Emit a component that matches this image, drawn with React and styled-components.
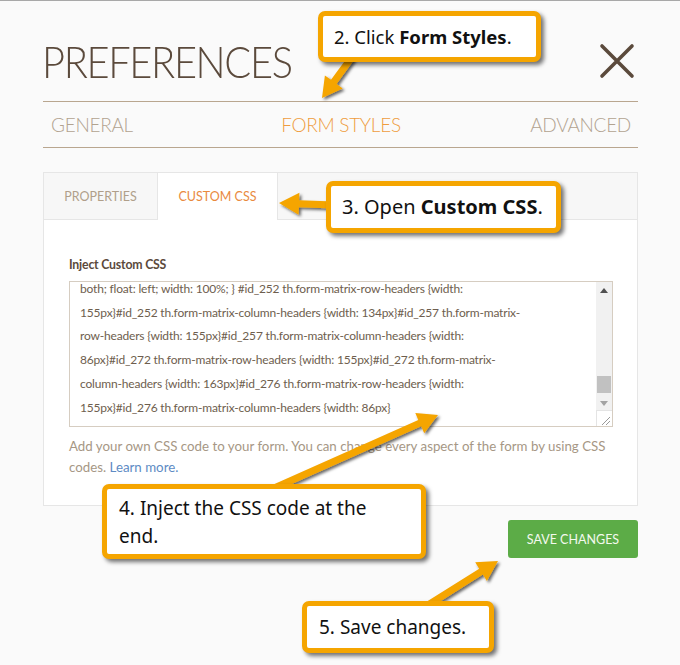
import React from 'react';
import styled, { createGlobalStyle } from 'styled-components';

const GlobalStyle = createGlobalStyle`
  html, body {
    margin: 0;
    padding: 0;
    background: #fafafa;
  }
  * {
    box-sizing: border-box;
  }
`;

const Page = styled.div`
  position: relative;
  width: 680px;
  height: 665px;
  overflow: hidden;
  padding: 0 42px 0 43px;
  border-top: 1px solid #a8a8a8;
  font-family: Lato, 'Liberation Sans', sans-serif;
`;

const Header = styled.div`
  display: flex;
  justify-content: space-between;
  align-items: flex-start;
  height: 101px;
  padding-top: 38px;
  border-bottom: 1px solid #b9a68f;
`;

const Title = styled.h1`
  margin: 0 0 0 -1px;
  font-size: 44px;
  line-height: 44px;
  font-weight: 300;
  letter-spacing: -1.5px;
  color: #5b4a3c;
  transform: scaleX(0.905);
  transform-origin: left center;
`;

const CloseButton = styled.div`
  width: 36px;
  height: 36px;
  margin: 4px 3px 0 0;
  color: #5b4a3c;
`;

const NavTabs = styled.div`
  display: grid;
  grid-template-columns: 1fr auto 1fr;
  align-items: center;
  height: 46px;
  padding: 0 7px 0 8px;
  border-bottom: 1px solid #b9a68f;
`;

const NavTab = styled.div`
  justify-self: ${p => p.$align};
  font-size: 19px;
  font-weight: 300;
  letter-spacing: -0.3px;
  color: ${p => (p.$active ? '#ef9d40' : '#b2a390')};
`;

const Panel = styled.div`
  margin-top: 24px;
  background: #ffffff;
  border: 1px solid #e6e6e6;
`;

const PanelTabs = styled.div`
  display: flex;
  height: 47px;
  background: #f7f7f7;
  border-bottom: 1px solid #e6e6e6;
`;

const PanelTab = styled.div`
  display: flex;
  align-items: center;
  justify-content: center;
  width: ${p => p.$w}px;
  height: ${p => (p.$active ? '47px' : '46px')};
  background: ${p => (p.$active ? '#ffffff' : 'transparent')};
  border-right: 1px solid #e6e6e6;
  font-size: 12.5px;
  color: ${p => (p.$active ? '#e98a3e' : '#b09f8a')};
`;

const PanelBody = styled.div`
  padding: 37px 24px 27px 25px;
`;

const Label = styled.div`
  font-size: 12.3px;
  font-weight: 700;
  letter-spacing: -0.2px;
  color: #5b4a3c;
  margin-bottom: 9px;
`;

const CodeBox = styled.div`
  display: flex;
  height: 146px;
  border: 1px solid #d6cdc1;
  background: #fff;
`;

const CodeText = styled.div`
  flex: 1;
  overflow: hidden;
  padding: 0 0 0 10px;
`;

const CodeLines = styled.div`
  margin-top: -5px;
  font-size: 12px;
  letter-spacing: -0.18px;
  line-height: 23.7px;
  color: #6e5e4e;
  white-space: nowrap;
`;

const Scrollbar = styled.div`
  display: flex;
  flex-direction: column;
  width: 16px;
`;

const Track = styled.div`
  flex: 1;
  display: flex;
  flex-direction: column;
  align-items: center;
  background: #f1f1f1;
  padding: 6px 0 4px;
`;

const Arrow = styled.div`
  width: 0;
  height: 0;
  border-left: 4px solid transparent;
  border-right: 4px solid transparent;
  ${p => (p.$up ? 'border-bottom: 5px solid #505050;' : 'border-top: 5px solid #a3a3a3;')}
`;

const Thumb = styled.div`
  width: 14px;
  height: 17px;
  margin-top: auto;
  margin-bottom: 8px;
  background: #c1c1c1;
`;

const Resizer = styled.div`
  height: 16px;
  background: #fff;
  border-left: 1px solid #e4e4e4;
  border-top: 1px solid #e4e4e4;
`;

const Help = styled.div`
  margin-top: 9px;
  font-size: 13.3px;
  line-height: 21px;
  color: #a69785;
  white-space: nowrap;
`;

const HelpLink = styled.span`
  color: #5e8bc4;
`;

const Footer = styled.div`
  display: flex;
  justify-content: flex-end;
  margin-top: 14px;
`;

const SaveButton = styled.div`
  width: 130px;
  height: 38px;
  display: flex;
  align-items: center;
  justify-content: center;
  background: #5cac47;
  border-radius: 3px;
  color: #f3f9ee;
  font-size: 12.5px;
`;

const Callout = styled.div`
  position: absolute;
  left: ${p => p.$x}px;
  top: ${p => p.$y}px;
  width: ${p => p.$w}px;
  height: ${p => p.$h}px;
  padding: 0 0 0 ${p => p.$pad || 12}px;
  display: flex;
  align-items: center;
  background: #ffffff;
  border: 5px solid #f5a500;
  border-radius: 7px;
  box-shadow: 3px 3px 4px rgba(0, 0, 0, 0.55);
  font-family: 'Noto Sans', 'Open Sans', sans-serif;
  font-size: ${p => p.$size || 19}px;
  line-height: 28px;
  color: #111;
  b {
    font-weight: 700;
  }
`;

const Overlay = styled.svg`
  position: absolute;
  left: 0;
  top: 0;
  pointer-events: none;
`;

function arrowPoints(x1, y1, x2, y2, shaft = 7, head = 22, headLen = 20) {
  const dx = x2 - x1;
  const dy = y2 - y1;
  const len = Math.hypot(dx, dy);
  const ux = dx / len;
  const uy = dy / len;
  const nx = -uy;
  const ny = ux;
  const bx = x2 - ux * headLen;
  const by = y2 - uy * headLen;
  const s = shaft / 2;
  const h = head / 2;
  const pts = [
    [x1 + nx * s, y1 + ny * s],
    [bx + nx * s, by + ny * s],
    [bx + nx * h, by + ny * h],
    [x2, y2],
    [bx - nx * h, by - ny * h],
    [bx - nx * s, by - ny * s],
    [x1 - nx * s, y1 - ny * s],
  ];
  return pts.map(p => p.map(v => v.toFixed(1)).join(',')).join(' ');
}

const arrows = [
  [352, 56, 322, 97],
  [334, 204, 279, 202],
  [272, 488, 438, 414],
  [428, 604, 498, 560],
];

const codeLines = [
  'both; float: left; width: 100%;  } #id_252 th.form-matrix-row-headers {width:',
  '155px}#id_252 th.form-matrix-column-headers {width: 134px}#id_257 th.form-matrix-',
  'row-headers {width: 155px}#id_257 th.form-matrix-column-headers {width:',
  '86px}#id_272 th.form-matrix-row-headers {width: 155px}#id_272 th.form-matrix-',
  'column-headers {width: 163px}#id_276 th.form-matrix-row-headers {width:',
  '155px}#id_276 th.form-matrix-column-headers {width: 86px}',
];

export default function App() {
  return (
    <>
      <GlobalStyle />
      <Page>
        <Header>
          <Title>PREFERENCES</Title>
          <CloseButton>
            <svg width="36" height="36" viewBox="0 0 36 36">
              <path d="M3 3 L33 33 M33 3 L3 33" stroke="currentColor" strokeWidth="3.6" strokeLinecap="round" />
            </svg>
          </CloseButton>
        </Header>
        <NavTabs>
          <NavTab $align="start">GENERAL</NavTab>
          <NavTab $align="center" $active>FORM STYLES</NavTab>
          <NavTab $align="end">ADVANCED</NavTab>
        </NavTabs>

        <Panel>
          <PanelTabs>
            <PanelTab $w={114}>PROPERTIES</PanelTab>
            <PanelTab $w={120} $active>CUSTOM CSS</PanelTab>
          </PanelTabs>
          <PanelBody>
            <Label>Inject Custom CSS</Label>
            <CodeBox>
              <CodeText>
                <CodeLines>
                  {codeLines.map((l, i) => (
                    <div key={i}>{l}</div>
                  ))}
                </CodeLines>
              </CodeText>
              <Scrollbar>
                <Track>
                  <Arrow $up />
                  <Thumb />
                  <Arrow />
                </Track>
                <Resizer>
                  <svg width="15" height="15" viewBox="0 0 15 15">
                    <path d="M5 13 L13 5 M9 13 L13 9" stroke="#999" strokeWidth="1" />
                  </svg>
                </Resizer>
              </Scrollbar>
            </CodeBox>
            <Help>
              Add your own CSS code to your form. You can change every aspect of the form by using CSS
              <br />
              codes. <HelpLink>Learn more.</HelpLink>
            </Help>
          </PanelBody>
        </Panel>

        <Footer>
          <SaveButton>SAVE CHANGES</SaveButton>
        </Footer>

        <Overlay width="680" height="665" viewBox="0 0 680 665">
          <defs>
            <filter id="arrowShadow" x="-20%" y="-20%" width="140%" height="140%">
              <feDropShadow dx="2" dy="2" stdDeviation="1.5" floodColor="#000" floodOpacity="0.6" />
            </filter>
          </defs>
          {arrows.map((a, i) => (
            <polygon key={i} points={arrowPoints(...a)} fill="#f5a500" filter="url(#arrowShadow)" />
          ))}
        </Overlay>

        <Callout $x={318} $y={10} $w={223} $h={51} $size={18.5} $pad={11}>
          <span>2. Click <b>Form Styles</b>.</span>
        </Callout>
        <Callout $x={326} $y={180} $w={235} $h={52} $size={20} $pad={11}>
          <span>3. Open <b>Custom CSS</b>.</span>
        </Callout>
        <Callout $x={102} $y={483} $w={324} $h={75}>
          <span>4. Inject the CSS code at the<br />end.</span>
        </Callout>
        <Callout $x={302} $y={600} $w={192} $h={52}>
          <span>5. Save changes.</span>
        </Callout>
      </Page>
    </>
  );
}
